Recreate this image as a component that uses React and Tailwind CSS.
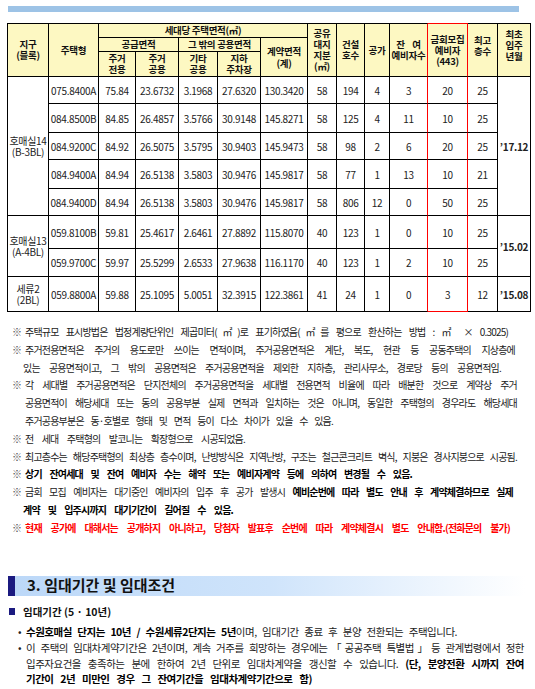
import React from "react";

const rows = [
  ["075.8400A", "75.84", "23.6732", "3.1968", "27.6320", "130.3420", "58", "194", "4", "3", "20", "25"],
  ["084.8500B", "84.85", "26.4857", "3.5766", "30.9148", "145.8271", "58", "125", "4", "11", "10", "25"],
  ["084.9200C", "84.92", "26.5075", "3.5795", "30.9403", "145.9473", "58", "98", "2", "6", "20", "25"],
  ["084.9400A", "84.94", "26.5138", "3.5803", "30.9476", "145.9817", "58", "77", "1", "13", "10", "21"],
  ["084.9400D", "84.94", "26.5138", "3.5803", "30.9476", "145.9817", "58", "806", "12", "0", "50", "25"],
  ["059.8100B", "59.81", "25.4617", "2.6461", "27.8892", "115.8070", "40", "123", "1", "0", "10", "25"],
  ["059.9700C", "59.97", "25.5299", "2.6533", "27.9638", "116.1170", "40", "123", "1", "2", "10", "25"],
  ["059.8800A", "59.88", "25.1095", "5.0051", "32.3915", "122.3861", "41", "24", "1", "0", "3", "12"],
];

const heights = ["h-[27px]", "h-[29px]", "h-[27px]", "h-[29px]", "h-[27px]", "h-[33px]", "h-[28px]", "h-[35px]"];

const regions = {
  0: { span: 5, name: "호매실14", code: "(B-3BL)" },
  5: { span: 2, name: "호매실13", code: "(A-4BL)" },
  7: { span: 1, name: "세류2", code: "(2BL)" },
};

const firstMove = {
  0: { span: 5, text: "’17.12" },
  5: { span: 2, text: "’15.02" },
  7: { span: 1, text: "’15.08" },
};

const cell = "border-r border-b border-black p-0 text-center align-middle";
const head = "border-r border-b border-black p-0 text-center align-middle bg-[#fdf8c2] font-bold text-[9.5px] leading-[11px] text-[#111]";

function Note({ mark = "※", className = "", children }) {
  return (
    <div className={`flex ${className}`}>
      <span className="w-[13px] shrink-0 text-[#555]">{mark}</span>
      <div>{children}</div>
    </div>
  );
}

export default function App() {
  return (
    <div className="w-[535px] bg-white text-[#222] font-['Noto_Sans_CJK_KR',sans-serif]">
      {/* top band */}
      <div className="pt-[6px] pl-[8px]">
        <div className="h-[6px] w-[511px] bg-[#9dc3e6]" />
      </div>

      {/* table */}
      <div className="pl-[7px] pt-[11px]">
        <table className="table-fixed border-separate border-spacing-0 w-[524px] text-[10px] tracking-[-0.3px]">
          <colgroup>
            <col className="w-[42px]" />
            <col className="w-[50px]" />
            <col className="w-[37px]" />
            <col className="w-[43px]" />
            <col className="w-[39px]" />
            <col className="w-[43px]" />
            <col className="w-[47px]" />
            <col className="w-[29px]" />
            <col className="w-[28px]" />
            <col className="w-[25px]" />
            <col className="w-[38px]" />
            <col className="w-[40px]" />
            <col className="w-[30px]" />
            <col className="w-[33px]" />
          </colgroup>
          <thead>
            <tr className="h-[15px]">
              <th rowSpan={3} className={`${head} border-l border-t`}>
                지구
                <br />
                (블록)
              </th>
              <th rowSpan={3} className={`${head} border-t`}>주택형</th>
              <th colSpan={5} className={`${head} border-t`}>세대당 주택면적(㎡)</th>
              <th rowSpan={3} className={`${head} border-t leading-[10.5px]`}>
                공유
                <br />
                대지
                <br />
                지분
                <br />
                (㎡)
              </th>
              <th rowSpan={3} className={`${head} border-t`}>
                건설
                <br />
                호수
              </th>
              <th rowSpan={3} className={`${head} border-t`}>공가</th>
              <th rowSpan={3} className={`${head} border-t border-r-[#ff0000]`}>
                잔&nbsp;&nbsp;&nbsp;&nbsp;여
                <br />
                예비자수
              </th>
              <th rowSpan={3} className={`${head} border-t border-t-[#ff0000] border-r-[#ff0000]`}>
                금회모집
                <br />
                예비자
                <br />
                (443)
              </th>
              <th rowSpan={3} className={`${head} border-t pb-[9px]`}>
                최고
                <br />
                층수
              </th>
              <th rowSpan={3} className={`${head} border-t leading-[10px] pb-[10px]`}>
                최초
                <br />
                입주
                <br />
                년월
              </th>
            </tr>
            <tr className="h-[14px]">
              <th colSpan={2} className={head}>공급면적</th>
              <th colSpan={2} className={head}>그 밖의 공용면적</th>
              <th rowSpan={2} className={`${head} leading-[12px]`}>
                계약면적
                <br />
                (계)
              </th>
            </tr>
            <tr className="h-[25px]">
              <th className={head}>
                주거
                <br />
                전용
              </th>
              <th className={head}>
                주거
                <br />
                공용
              </th>
              <th className={head}>
                기타
                <br />
                공용
              </th>
              <th className={head}>
                지하
                <br />
                주차장
              </th>
            </tr>
          </thead>
          <tbody>
            {rows.map((r, i) => {
              const last = i === rows.length - 1;
              return (
                <tr key={r[0]} className={heights[i]}>
                  {regions[i] && (
                    <td rowSpan={regions[i].span} className={`${cell} border-l leading-[11px]`}>
                      {regions[i].name}
                      <br />
                      {regions[i].code}
                    </td>
                  )}
                  {r.map((v, j) => (
                    <td
                      key={j}
                      className={`${cell} ${j === 9 ? "border-r-[#ff0000]" : ""} ${
                        j === 10 ? "border-r-[#ff0000]" : ""
                      } ${j === 10 && last ? "border-b-[#ff0000]" : ""}`}
                    >
                      {v}
                    </td>
                  ))}
                  {firstMove[i] && (
                    <td rowSpan={firstMove[i].span} className={`${cell} font-bold`}>
                      {firstMove[i].text}
                    </td>
                  )}
                </tr>
              );
            })}
          </tbody>
        </table>
      </div>

      {/* notes */}
      <div className="pl-[12px] pt-[11px] text-[10px] leading-[17.8px] tracking-[-0.8px]">
        <Note>
          <div className="w-[483px] text-justify [text-align-last:justify]">
            주택규모 표시방법은 법정계량단위인 제곱미터(㎡)로 표기하였음(㎡를 평으로 환산하는 방법 : ㎡ × 0.3025)
          </div>
        </Note>
        <Note>
          <div className="w-[490px] text-justify [text-align-last:justify]">
            주거전용면적은 주거의 용도로만 쓰이는 면적이며, 주거공용면적은 계단, 복도, 현관 등 공동주택의 지상층에
          </div>
          <div className="w-[478px] -ml-[2px] text-justify [text-align-last:justify]">
            있는 공용면적이고, 그 밖의 공용면적은 주거공용면적을 제외한 지하층, 관리사무소, 경로당 등의 공용면적임.
          </div>
        </Note>
        <Note>
          <div className="w-[492px] text-justify [text-align-last:justify]">
            각 세대별 주거공용면적은 단지전체의 주거공용면적을 세대별 전용면적 비율에 따라 배분한 것으로 계약상 주거
          </div>
          <div className="w-[492px] text-justify [text-align-last:justify]">
            공용면적이 해당세대 또는 동의 공용부분 실제 면적과 일치하는 것은 아니며, 동일한 주택형의 경우라도 해당세대
          </div>
          <div className="w-[308px] text-justify [text-align-last:justify]">
            주거공용부분은 동·호별로 형태 및 면적 등이 다소 차이가 있을 수 있음.
          </div>
        </Note>
        <Note>
          <div className="w-[220px] text-justify [text-align-last:justify]">전 세대 주택형의 발코니는 확장형으로 시공되었음.</div>
        </Note>
        <Note>
          <div className="w-[492px] text-justify [text-align-last:justify]">
            최고층수는 해당주택형의 최상층 층수이며, 난방방식은 지역난방, 구조는 철근콘크리트 벽식, 지붕은 경사지붕으로 시공됨.
          </div>
        </Note>
        <Note className="font-bold text-black">
          <div className="w-[387px] text-justify [text-align-last:justify]">
            상기 잔여세대 및 잔여 예비자 수는 해약 또는 예비자계약 등에 의하여 변경될 수 있음.
          </div>
        </Note>
        <Note>
          <div className="w-[488px] text-justify [text-align-last:justify]">
            금회 모집 예비자는 대기중인 예비자의 입주 후 공가 발생시{" "}
            <b className="text-black">예비순번에 따라 별도 안내 후 계약체결하므로 실제</b>
          </div>
          <div className="w-[210px] -ml-[2px] font-bold text-black text-justify [text-align-last:justify]">
            계약 및 입주시까지 대기기간이 길어질 수 있음.
          </div>
        </Note>
        <Note className="font-bold text-[#ff0000]">
          <div className="w-[485px] text-justify [text-align-last:justify]">
            현재 공가에 대해서는 공개하지 아니하고, 당첨자 발표후 순번에 따라 계약체결시 별도 안내함.(전화문의 불가)
          </div>
        </Note>
      </div>

      {/* section heading */}
      <div className="mt-[39px] ml-[8px] flex h-[20px] w-[517px]">
        <div className="w-[7px] bg-[#1b1a80]" />
        <div className="flex flex-1 items-center bg-linear-to-r from-[#bcd8f8] via-[#cfe4fb] to-white pl-[12px] text-[15px] font-bold text-[#111]">
          3. 임대기간 및 임대조건
        </div>
      </div>

      <div className="mt-[8px] ml-[9px] flex items-center text-[10.5px] font-bold leading-[16px] text-[#111]">
        <span className="mr-[8px] h-[7px] w-[6px] bg-[#1b1a80]" />
        임대기간 (5 · 10년)
      </div>

      <div className="ml-[18px] mt-[4px] text-[10.5px] leading-[15.5px] tracking-[-0.5px]">
        <div className="flex">
          <span className="w-[8px] shrink-0">•</span>
          <div className="w-[431px] text-justify [text-align-last:justify]">
            <b className="text-black">수원호매실 단지는 10년 / 수원세류2단지는 5년</b>이며, 임대기간 종료 후 분양 전환되는 주택입니다.
          </div>
        </div>
        <div className="mt-[1px] flex">
          <span className="w-[8px] shrink-0">•</span>
          <div>
            <div className="w-[498px] text-justify [text-align-last:justify]">
              이 주택의 임대차계약기간은 2년이며, 계속 거주를 희망하는 경우에는「공공주택 특별법」등 관계법령에서 정한
            </div>
            <div className="w-[498px] text-justify [text-align-last:justify]">
              입주자요건을 충족하는 분에 한하여 2년 단위로 임대차계약을 갱신할 수 있습니다.{" "}
              <b className="text-black">(단, 분양전환 시까지 잔여</b>
            </div>
            <div className="w-[286px] font-bold text-black text-justify [text-align-last:justify]">
              기간이 2년 미만인 경우 그 잔여기간을 임대차계약기간으로 함)
            </div>
          </div>
        </div>
      </div>
    </div>
  );
}
